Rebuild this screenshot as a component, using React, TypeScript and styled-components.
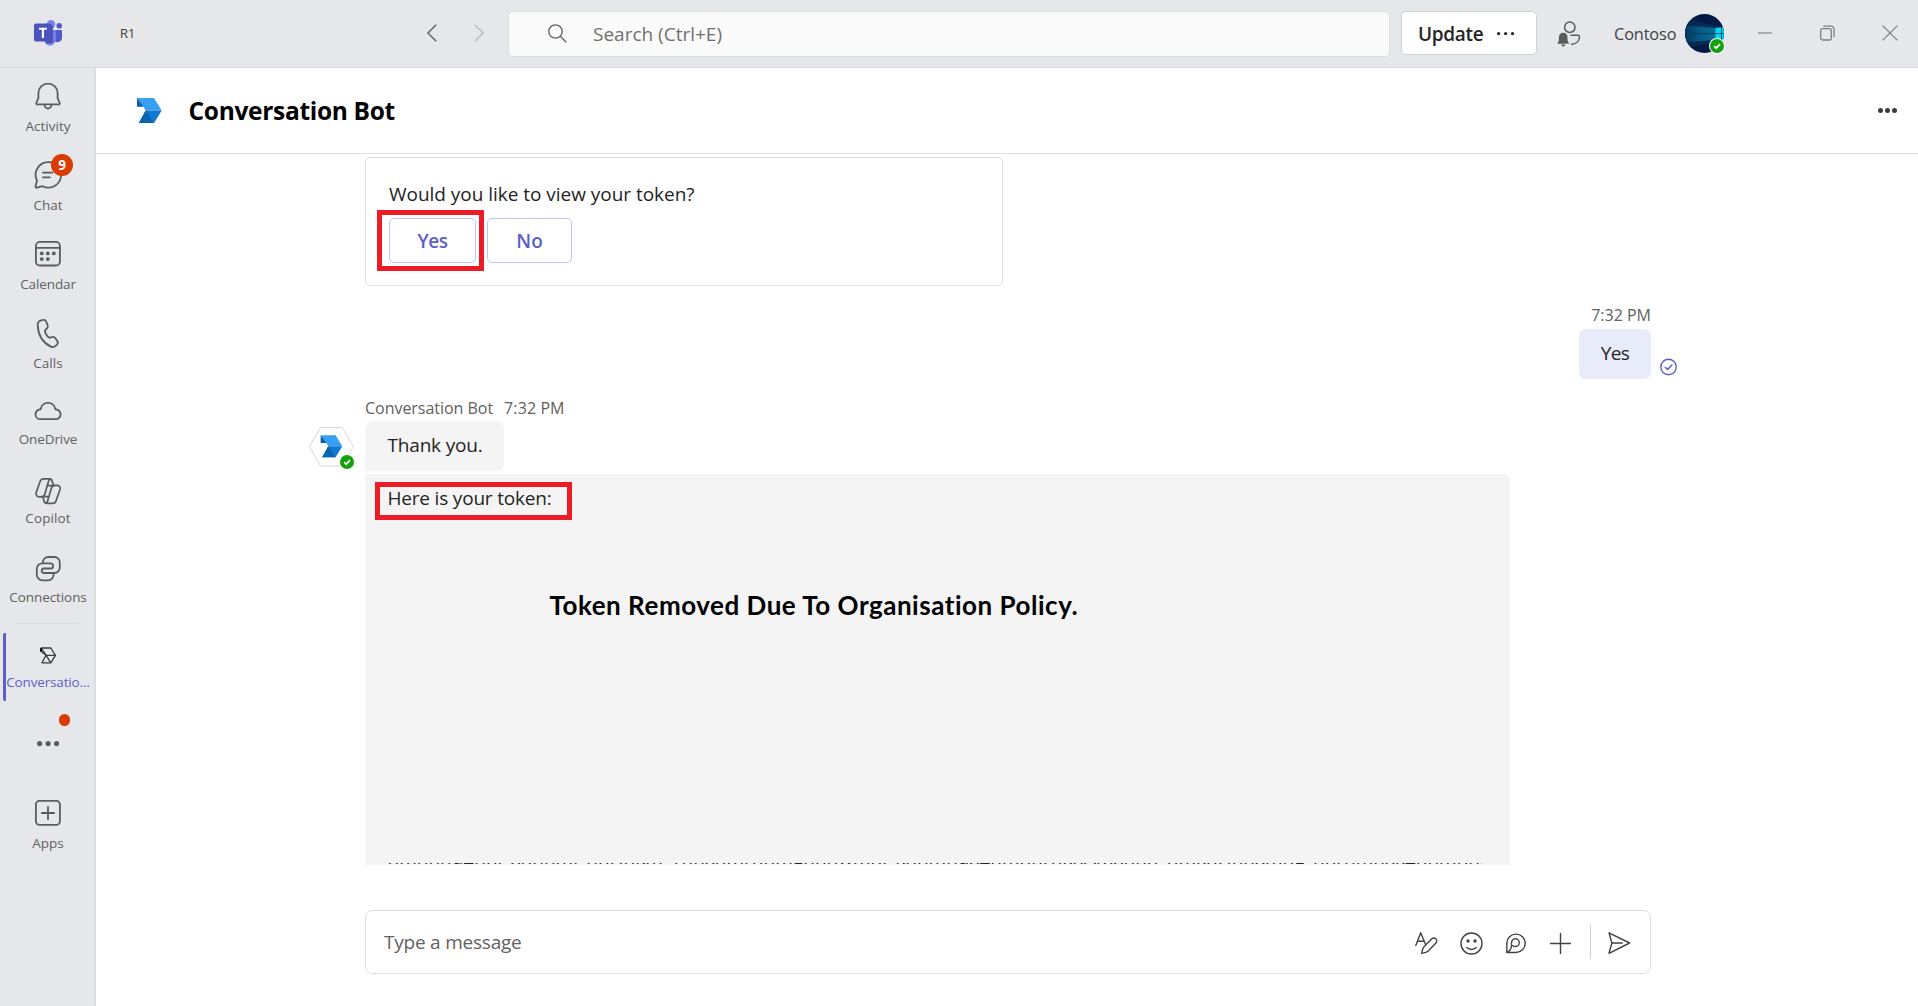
import React from 'react';
import styled, { createGlobalStyle, css } from 'styled-components';

const Global = createGlobalStyle`
  * { box-sizing: border-box; }
  body { margin: 0; background: #fff; font-family: "Open Sans", "Noto Sans", sans-serif; }
`;

const Shell = styled.div`
  width: 1918px; height: 1006px; overflow: hidden;
  display: grid; grid-template-rows: 68px 1fr; grid-template-columns: 96px 1fr;
`;

const Text = styled.span<{ $size?: number; $ls?: number; $weight?: number; $color?: string; $lh?: number }>`
  font-size: ${p => p.$size ?? 19}px;
  letter-spacing: ${p => p.$ls ?? 0}px;
  font-weight: ${p => p.$weight ?? 400};
  color: ${p => p.$color ?? '#242424'};
  line-height: ${p => p.$lh ?? 22}px;
  white-space: nowrap;
`;

/* ---------- title bar ---------- */
const TitleBar = styled.header`
  grid-column: 1 / 3; display: flex; align-items: center;
  background: #e6e7eb; border-bottom: 1px solid #d6d7da;
`;
const Logo = styled.div`margin-left: 34px; width: 28px; height: 26px; display: flex; margin-top: -1px;`;
const OrgPill = styled.div`
  margin-left: 48px; width: 35px; height: 23px; border-radius: 12px; background: #e8e8e8;
  display: flex; align-items: center; justify-content: center; margin-top: -1px;
`;
const NavArrows = styled.div`margin-left: 282px; width: 57px; display: flex; justify-content: space-between; margin-top: -1px;`;
const SearchBox = styled.div`
  margin-left: 24px; width: 882px; height: 46px; border: 1px solid #dddee0; border-radius: 5px;
  background: #fafafa; display: flex; align-items: center; padding-left: 39px; gap: 26px;
`;
const UpdateButton = styled.button`
  margin-left: 11px; width: 136px; height: 44px; background: #fff; border: 1px solid #d1d1d1; border-radius: 5px;
  padding: 1px 0 0 16px; display: flex; align-items: center; gap: 14px; font-family: inherit; margin-top: -1px;
`;
const PeopleSlot = styled.div`margin-left: 20px; width: 24px; height: 26px; display: flex;`;
const Tenant = styled.div`margin-left: 33px; width: 62px; display: flex;`;
const Avatar = styled.div`margin-left: 9px; width: 39px; height: 39px; position: relative; display: flex;`;
const Presence = styled.span<{ $x: number; $y: number }>`
  position: absolute; left: ${p => p.$x}px; top: ${p => p.$y}px; width: 16px; height: 16px; display: flex;
`;
const WindowButtons = styled.div`margin-left: 34px; width: 140px; display: flex; justify-content: space-between; align-items: center; margin-top: -1px;`;

/* ---------- app rail ---------- */
const Rail = styled.nav`
  background: #e6e7eb; border-right: 2px solid #dcdde1; display: flex; flex-direction: column; align-items: center;
`;
const RailItem = styled.div<{ $pad: number; $gap: number }>`
  width: 100%; padding-top: ${p => p.$pad}px; display: flex; flex-direction: column; align-items: center;
  gap: ${p => p.$gap}px; padding-left: 2px;
`;
const RailIcon = styled.div`width: 28px; height: 28px; position: relative; display: flex; svg { overflow: visible; }`;
const Badge = styled.span`
  position: absolute; left: 17px; top: -7px; width: 22px; height: 22px; border-radius: 11px;
  background: #da3b01; color: #fff; font-size: 13.5px; font-weight: 700; line-height: 22px; text-align: center;
`;
const RailDivider = styled.div`width: 62px; height: 1px; background: #dadbdf; margin: 17px 0 9px;`;
const ActiveItem = styled.div`
  align-self: stretch; margin-left: 3px; height: 68px; border-left: 3px solid #5b5fc7; border-radius: 2px 0 0 2px;
  display: flex; flex-direction: column; align-items: center; padding: 14px 4px 0 0; gap: 9px;
`;
const MoreItem = styled.div`
  width: 28px; height: 28px; margin-top: 29px; position: relative; margin-left: 2px;
  display: flex; align-items: center; justify-content: center;
`;
const Dot = styled.span`
  position: absolute; left: 25px; top: -16px; width: 11px; height: 12px; border-radius: 6px; background: #da3b01;
`;

/* ---------- chat ---------- */
const Main = styled.main`display: flex; flex-direction: column; background: #fff;`;
const ChatHeader = styled.div`
  height: 86px; border-bottom: 1px solid #dfdfdf; display: flex; align-items: center; padding: 0 21px 0 41px;
`;
const Title = styled.h1`
  flex: 1; margin: 0 0 0 26.5px; font-size: 24.5px; font-weight: 700; letter-spacing: -0.31px; line-height: 34px; color: #000;
`;
const Feed = styled.section`height: 711px; overflow: hidden; padding: 3px 0 0 269px; display: flex; flex-direction: column;`;
const Card = styled.div`
  width: 638px; height: 129px; flex: none; border: 1px solid #dfdfdf; border-radius: 5px; padding: 25px 0 0 23px;
  display: flex; flex-direction: column;
`;
const Actions = styled.div`display: flex; gap: 11px; margin-top: 13px;`;
const CardButton = styled.button<{ $w: number }>`
  width: ${p => p.$w}px; height: 45px; background: #fff; border: 1px solid #bdc3fa; border-radius: 5px; padding: 0;
  font-family: inherit; position: relative; display: flex; align-items: center; justify-content: center;
`;
const Highlight = styled.span<{ $x: number; $y: number; $w: number; $h: number }>`
  position: absolute; left: ${p => p.$x}px; top: ${p => p.$y}px; width: ${p => p.$w}px; height: ${p => p.$h}px;
  border: 5px solid #ee1c24;
`;
const OwnMessage = styled.div`
  width: 1286px; margin-top: 18px; display: flex; flex-direction: column; align-items: flex-end; gap: 3px;
`;
const Bubble = styled.div<{ $own?: boolean }>`
  height: 50px; position: relative; display: flex; align-items: center; padding-bottom: 2px;
  ${p => p.$own
    ? css`width: 72px; background: #e8ebfa; border-radius: 7px; justify-content: center;`
    : css`width: 139px; background: #f4f4f4; border-radius: 7px 7px 7px 0; padding-left: 22.5px;`}
`;
const Receipt = styled.span`position: absolute; left: 80px; top: 29px; display: flex;`;
const SenderLine = styled.div`margin-top: 17px; margin-bottom: 1px; display: flex; gap: 11px; height: 24px; align-items: center;`;
const BotAvatar = styled.div`position: absolute; left: -57px; top: 5px; width: 46px; height: 42px; display: flex;`;
const TokenPanel = styled.div`
  position: relative; margin-top: 3px; width: 1145px; height: 391px; background: #f4f4f4; border-radius: 0 7px 0 0;
  padding: 13px 22px 0 22.5px; display: flex; flex-direction: column; overflow: hidden;
`;
const Notice = styled.p`
  margin: 80px 0 0 162px; font-family: Lato, "Open Sans", sans-serif; font-weight: 700; font-size: 26px;
  letter-spacing: 0.52px; line-height: 32px; color: #000; white-space: nowrap;
`;
/* Only the foot of the token line stays visible at the bottom of the scroll area. */
const TokenTail = styled.div`margin-top: 242px; height: 2px; width: 1094px; overflow: hidden; flex: none;`;
const TokenText = styled.p`
  margin: -17px 0 0; font-size: 19px; line-height: 22px; color: #242424; white-space: nowrap;
`;

const Composer = styled.div`
  margin: 45px 0 0 269px; width: 1286px; height: 64px; border: 1px solid #dfdfdf; border-radius: 7px;
  display: flex; align-items: center; padding: 0 20px 0 18px;
`;
const Spacer = styled.div`flex: 1;`;
const Tools = styled.div`display: flex; align-items: center; svg { display: block; overflow: visible; }`;
const Tool = styled.div<{ $ml: number }>`margin-left: ${p => p.$ml}px; margin-top: 2px; display: flex;`;
const ToolDivider = styled.div`width: 1px; height: 34px; background: #d1d1d1; margin-left: 19px;`;

/* ---------- drawings ---------- */
const G = '#5c5c5c';
const Line = ({ children, size = 28, w = 1.8, color = G }: { children: React.ReactNode; size?: number; w?: number; color?: string }) => (
  <svg width={size} height={size} viewBox={`0 0 ${size} ${size}`} fill="none" stroke={color} strokeWidth={w} strokeLinecap="round" strokeLinejoin="round">{children}</svg>
);
const BotShape = () => (
  <>
    <path d="M0 0h17l7.7 12.5H8.7L6.5 8.8z" fill="#38a0f2" />
    <path d="M0 0v8.8h6.8z" fill="#0f5ea8" />
    <path d="M8.7 12.5h16L17 25.1H1.8z" fill="#1379d0" />
    <path d="M8.7 12.5L1.8 25.1h14.8z" fill="#0b64b0" />
  </>
);
const CheckBadge = () => (
  <svg width="16" height="16" viewBox="0 0 16 16">
    <circle cx="8" cy="8" r="8" fill="#fff" /><circle cx="8" cy="8" r="7" fill="#13a10e" />
    <path d="M5.2 8.2l2 2 3.8-4" fill="none" stroke="#fff" strokeWidth="1.7" />
  </svg>
);
const Dots = ({ gap, r, color }: { gap: number; r: number; color: string }) => (
  <svg width={gap * 2 + r * 2} height={r * 2} viewBox={`0 0 ${gap * 2 + r * 2} ${r * 2}`} fill={color}>
    {[0, 1, 2].map(i => <circle key={i} cx={r + i * gap} cy={r} r={r} />)}
  </svg>
);

const bell = <Line><path d="M14 1.6c-5.4 0-9.6 4.2-9.6 9.4v5.2L2.3 21c-.3.7.1 1.4.9 1.4h21.6c.8 0 1.2-.7.9-1.4l-2.1-4.8V11c0-5.2-4.2-9.4-9.6-9.4z" /><path d="M10.6 22.8a3.4 3.7 0 0 0 6.8 0" /></Line>;
const chat = <Line><path d="M14.4 1.2a12.7 12.7 0 1 1-5.8 24l-5.7 1.5c-.9.2-1.6-.5-1.4-1.4l1.5-5.6A12.7 12.7 0 0 1 14.4 1.2z" /><path d="M9 11.7h9.4M9 16.3h6.8" /></Line>;
const calendar = <Line><rect x="1.9" y="1.9" width="24" height="23.6" rx="4" /><path d="M2 7.8h23.7" />
  <g fill={G} stroke="none">{[[7.8, 13.4], [13.8, 13.4], [19.8, 13.4], [7.8, 19.1], [13.8, 19.1]].map(([x, y]) => <circle key={`${x}-${y}`} cx={x} cy={y} r="1.9" />)}</g></Line>;
const phone = <Line><path d="M6.6 1.6l2.1-.6c1.6-.4 3 .4 3.6 1.8l1.3 3.4c.5 1.2.2 2.4-.7 3.3l-2 1.8c.3 2.8 2.2 6 4.5 7.5l2.6-.8c1.2-.4 2.5.1 3.2 1.1l2 2.8c.9 1.2.7 2.8-.3 3.8l-1.3 1.2c-1.3 1.2-3.2 1.5-4.8.7C8.8 23.7 4.2 16 3.7 6.4c-.2-2.2 1-4.2 2.9-4.8z" /></Line>;
const cloud = <Line><path d="M6.8 22.2h14.6a4.9 4.9 0 0 0 .6-9.8h-.6c-.5-4-3.6-6.6-7.4-6.6s-6.9 2.6-7.4 6.6H6a4.9 4.9 0 0 0 .8 9.8z" /></Line>;
const copilot = <Line w={1.7}>
  <path d="M19.4 8.700l-1.100-4.300c-.4-1.700-1.400-2.600-3-2.600H9.600c-1.900 0-3.100 1.100-3.600 2.900L2.200 15.500c-.7 2.500.7 4.300 3 4.300h2.500c1.500 0 2.600-1 3-2.400L14.600 4c.3-1.200.9-2 2-2.200" />
  <path d="M8.800 19.500l1.100 4.200c.4 1.700 1.400 2.600 3 2.600h5.700c1.900 0 3.100-1.100 3.600-2.900l3.800-10.900c.7-2.500-.7-4.100-3-4.100h-2.500c-1.500 0-2.600 1-3 2.400L13.600 24c-.3 1.200-.9 2-2 2.200" />
  <path d="M13.400 8.600h7M7.600 19.700h6.800" />
</Line>;
const connections = <Line>
  <path d="M8.800 8.300V7.500a5.500 5.500 0 0 1 5.500-5.500h6a5.500 5.500 0 0 1 5.500 5.500v5a5.500 5.500 0 0 1-5.500 5.500H10a2 2 0 0 1 0-4.500h6.500a2.400 2.400 0 0 0 0-5.200H8.300a5.500 5.500 0 0 0-5.500 5.500v6A5.500 5.500 0 0 0 8.300 25.300h5.800a5.500 5.500 0 0 0 5.500-5.500v-1.500" />
</Line>;
const apps = <Line><rect x="1.9" y="1.9" width="24" height="24" rx="3.6" /><path d="M14 7.8v12.4M7.8 14h12.4" /></Line>;

const rail = [
  { label: 'Activity', icon: bell, pad: 13.5, gap: 7.5, ls: 0 },
  { label: 'Chat', icon: chat, pad: 26, gap: 6.5, ls: -0.05, badge: '9' },
  { label: 'Calendar', icon: calendar, pad: 26.5, gap: 7, ls: -0.12 },
  { label: 'Calls', icon: phone, pad: 25.5, gap: 7, ls: 0 },
  { label: 'OneDrive', icon: cloud, pad: 25.5, gap: 5, ls: -0.1 },
  { label: 'Copilot', icon: copilot, pad: 28.5, gap: 4, ls: 0.1 },
  { label: 'Connections', icon: connections, pad: 28.5, gap: 5, ls: -0.08 },
];

export default function App() {
  return (
    <Shell>
      <Global />
      <TitleBar>
        <Logo>
          <svg width="28" height="26" viewBox="0 0 28 26">
            <circle cx="25.2" cy="5.8" r="2.8" fill="#5059c9" />
            <path d="M19 10h8.2c.5 0 .8.4.8.8v6.7c0 2.8-2 4.7-4.5 4.7-2.7 0-4.5-2-4.5-4.7z" fill="#5059c9" />
            <circle cx="17" cy="4.2" r="4.2" fill="#7b83eb" />
            <path d="M10.5 10h11.3v9c0 3.5-2.6 6.6-5.9 6.6-3 0-5.4-2.6-5.4-5.6z" fill="#7b83eb" />
            <path d="M10 4.8h6.5c1.6 0 2.5 1 2.5 2.3v14c0 1.3-.9 2.1-2 2.1h-5.5z" fill="#3c3f9e" opacity=".75" />
            <rect x="0" y="3.6" width="17.8" height="18" rx="1.8" fill="#4b53bc" />
            <path d="M5 8.700h7.800M8.900 8.700v9.300" stroke="#fff" strokeWidth="2.1" />
          </svg>
        </Logo>
        <OrgPill><Text $size={13.5} $ls={-0.3} $color="#424242">R1</Text></OrgPill>
        <NavArrows>
          <svg width="10" height="18" viewBox="0 0 10 18" fill="none" stroke="#5c5c5c" strokeWidth="1.4"><path d="M9.2.8L.9 9l8.3 8.2" /></svg>
          <svg width="10" height="18" viewBox="0 0 10 18" fill="none" stroke="#b9b9bb" strokeWidth="1.4"><path d="M.8.8L9.1 9 .8 17.2" /></svg>
        </NavArrows>
        <SearchBox>
          <svg width="19" height="19" viewBox="0 0 19 19" fill="none" stroke="#616161" strokeWidth="1.3" strokeLinecap="round"><circle cx="7.5" cy="7.5" r="6.7" /><path d="M12.3 12.3l5.7 5.7" /></svg>
          <Text $color="#707070">Search (Ctrl+E)</Text>
        </SearchBox>
        <UpdateButton><Text $weight={600} $ls={-0.3}>Update</Text><Dots gap={7} r={1.6} color="#242424" /></UpdateButton>
        <PeopleSlot>
          <svg width="24" height="26" viewBox="0 0 24 26" fill="none" stroke={G} strokeWidth="1.5">
            <circle cx="12.8" cy="6.2" r="5.2" />
            <path d="M13.5 14.300h7.500c.9 0 1.500.6 1.500 1.500 0 4-3.200 7.200-8.500 7.600" />
            <path d="M6.2 11.8c-2.6 0-4.3 1.900-4.300 4.500v3L.4 22.7h11.700L10.500 19.300v-3c0-2.600-1.700-4.500-4.300-4.500z" fill={G} stroke="none" />
            <path d="M4.2 23.600h4a2 2 0 0 1-4 0z" fill={G} stroke="none" />
          </svg>
        </PeopleSlot>
        <Tenant><Text $size={16.3} $ls={-0.12} $color="#424242">Contoso</Text></Tenant>
        <Avatar>
          <svg width="39" height="39" viewBox="0 0 39 39">
            <defs>
              <clipPath id="av"><circle cx="19.5" cy="19.5" r="19.5" /></clipPath>
              <linearGradient id="beam"><stop offset="0" stopColor="#06375e" /><stop offset=".5" stopColor="#035d84" /><stop offset="1" stopColor="#086f96" /></linearGradient>
            </defs>
            <g clipPath="url(#av)">
              <rect width="39" height="39" fill="#041a44" />
              <path d="M0 5l39 8v14L0 34z" fill="#052a55" />
              <path d="M0 11.5l31 2.500v12L0 28z" fill="url(#beam)" />
              <path d="M30.5 14l8.500-1v13.500l-8.500-1z" fill="#00d9f5" />
              <path d="M0 19.6h39M36.5 13v13" stroke="#04355a" strokeWidth=".8" />
            </g>
          </svg>
          <Presence $x={24} $y={24}><CheckBadge /></Presence>
        </Avatar>
        <WindowButtons>
          <svg width="14" height="2" viewBox="0 0 14 2"><path d="M0 1h14" stroke="#8a8a8c" strokeWidth="1.3" /></svg>
          <svg width="15" height="16" viewBox="0 0 15 16" fill="none" stroke="#808082" strokeWidth="1.3"><rect x=".7" y="3.6" width="10.6" height="11.4" rx="2" /><path d="M3.3 1.200h7.700a3 3 0 0 1 3 3v8" /></svg>
          <svg width="16" height="16" viewBox="0 0 16 16" stroke="#808082" strokeWidth="1.3"><path d="M.6.6l14.8 14.8M15.4.6L.6 15.4" /></svg>
        </WindowButtons>
      </TitleBar>

      <Rail>
        {rail.map(r => (
          <RailItem key={r.label} $pad={r.pad} $gap={r.gap}>
            <RailIcon>{r.icon}{r.badge && <Badge>{r.badge}</Badge>}</RailIcon>
            <Text $size={13.5} $lh={18} $ls={r.ls} $color="#616161">{r.label}</Text>
          </RailItem>
        ))}
        <RailDivider />
        <ActiveItem>
          <svg width="17" height="17" viewBox="0 0 17 17" fill="none" stroke="#3a3a3a" strokeWidth="1.3" strokeLinejoin="round">
            <path d="M1.2 1h9.600l4.600 7.300-4.600 7.500H2l4-7.500-4.800-3.800z" /><path d="M1.2 1l5 7.300h9.200M6.2 8.300l4.400 7.300" /><path d="M1 4.500V1.200" stroke="#000" strokeWidth="1.8" />
          </svg>
          <Text $size={13.5} $lh={18} $ls={-0.15} $color="#5b5fc7">Conversatio...</Text>
        </ActiveItem>
        <MoreItem><Dots gap={8.5} r={2.6} color={G} /><Dot /></MoreItem>
        <RailItem $pad={41} $gap={7}>
          <RailIcon>{apps}</RailIcon>
          <Text $size={13.5} $lh={18} $color="#616161">Apps</Text>
        </RailItem>
      </Rail>

      <Main>
        <ChatHeader>
          <svg width="25" height="25.3" viewBox="0 0 25 25.3"><BotShape /></svg>
          <Title>Conversation Bot</Title>
          <Dots gap={7} r={2.5} color="#3a3a3a" />
        </ChatHeader>
        <Feed>
          <Card>
            <Text $ls={-0.03}>Would you like to view your token?</Text>
            <Actions>
              <CardButton $w={87}><Text $weight={600} $ls={-0.5} $color="#5b5fc7">Yes</Text><Highlight $x={-13} $y={-9} $w={107} $h={61} /></CardButton>
              <CardButton $w={85}><Text $weight={600} $color="#5b5fc7">No</Text></CardButton>
            </Actions>
          </Card>
          <OwnMessage>
            <Text $size={16} $color="#616161">7:32 PM</Text>
            <Bubble $own>
              <Text $ls={-0.6}>Yes</Text>
              <Receipt><Line size={18} w={1.4} color="#5b5fc7"><circle cx="9.5" cy="9" r="7.7" /><path d="M6.2 9.300l2.300 2.300 4.500-4.600" /></Line></Receipt>
            </Bubble>
          </OwnMessage>
          <SenderLine>
            <Text $size={16} $ls={-0.03} $color="#616161">Conversation Bot</Text>
            <Text $size={16} $ls={0.1} $color="#616161">7:32 PM</Text>
          </SenderLine>
          <Bubble>
            <Text $ls={-0.18}>Thank you.</Text>
            <BotAvatar>
              <svg width="46" height="42" viewBox="0 0 46 42">
                <path d="M12.5 1.500h21.500L45.4 20.500 34 40H12.500L1.500 20.500z" fill="#fff" stroke="#d6d6d6" strokeWidth="1" />
                <g transform="translate(12.6 9.2) scale(.88)"><BotShape /></g>
              </svg>
              <Presence $x={31} $y={28}><CheckBadge /></Presence>
            </BotAvatar>
          </Bubble>
          <TokenPanel>
            <Text $ls={-0.19}>Here is your token:</Text>
            <Highlight $x={10} $y={8} $w={197} $h={38} />
            <Notice>Token Removed Due To Organisation Policy.</Notice>
            <TokenTail>
              <TokenText>nmnnhuZnni_xnnhmi_nnHnkm_TnnxhmrnnmEnhnwmni_khnmnuxZnmnhrnknAmxnhn_nmkhHnnxmnE_hnrnmnxkZnhmnnrxnmhkn</TokenText>
            </TokenTail>
          </TokenPanel>
        </Feed>
        <Composer>
          <Text $ls={-0.22} $color="#616161">Type a message</Text>
          <Spacer />
          <Tools>
            <Tool $ml={0}><Line size={22} w={1.4} color="#424242"><path d="M.8 13.500L5.700.8l4.700 11.200M2.600 9.300h6.300M20.800 6.800a2.700 2.700 0 0 0-3.900 0L9.200 14.500c-.8.8-1.300 1.700-1.600 2.800l-1 4.100 4.100-1c1.100-.3 2-.8 2.800-1.600l7.400-7.900a2.700 2.700 0 0 0-.1-4.100z" /></Line></Tool>
            <Tool $ml={23}><Line size={23} w={1.4} color="#424242"><circle cx="11.5" cy="11.5" r="10.5" /><path d="M6.8 15.500c2.600 2.600 6.800 2.600 9.400 0" /><circle cx="8" cy="9" r="1" fill="#424242" /><circle cx="15" cy="9" r="1" fill="#424242" /></Line></Tool>
            <Tool $ml={23}><Line size={20} w={1.4} color="#424242"><path d="M.8 19.300V10.300A9.200 9.200 0 1 1 10 19.500H.8c3.200-1.600 4.400-3 4.700-6.500V9.700a3.900 3.900 0 1 1 4.200 3.800c-1.200 0-2.200-.3-2.900-.8" /></Line></Tool>
            <Tool $ml={24}><Line size={21} w={1.4} color="#424242"><path d="M10.5.5v20M.5 10.500h20" /></Line></Tool>
            <ToolDivider />
            <Tool $ml={17}><Line size={22} w={1.4} color="#424242"><path d="M1 .8L21.600 11 1 21.300 3.900 11zM3.900 11h10.400" /></Line></Tool>
          </Tools>
        </Composer>
      </Main>
    </Shell>
  );
}
